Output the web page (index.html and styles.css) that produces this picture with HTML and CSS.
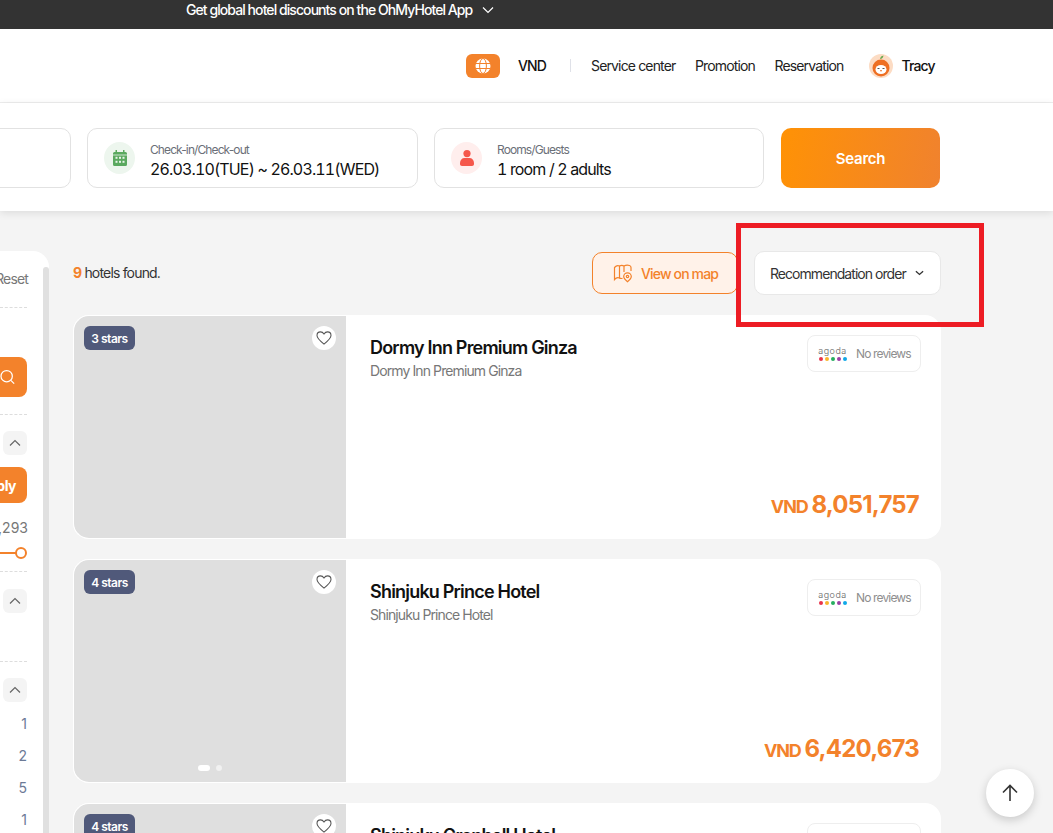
FILE: index.html
```html
<!DOCTYPE html>
<html lang="en">
<head>
<meta charset="utf-8">
<title>OhMyHotel</title>
<link rel="stylesheet" href="styles.css">
</head>
<body>
<div class="page">
  <div class="promo">
    <span>Get global hotel discounts on the OhMyHotel App</span>
    <svg class="promo-chevron" viewBox="0 0 12 8" width="12" height="8"><path d="M1 1.500l5 5 5-5" fill="none" stroke="#fff" stroke-width="1.200"/></svg>
  </div>

  <header class="header">
    <span class="globe">
      <svg viewBox="0 0 16 16" width="16" height="16"><circle cx="8" cy="8" r="7.500" fill="#fff"/><g fill="none" stroke="#f3822b" stroke-width="1"><ellipse cx="8" cy="8" rx="3.400" ry="7.500"/><path d="M1 5.500h14M1 10.500h14"/></g></svg>
    </span>
    <span class="currency">VND</span>
    <span class="divider"></span>
    <nav class="nav">
      <a>Service center</a>
      <a>Promotion</a>
      <a>Reservation</a>
    </nav>
    <span class="avatar">
      <svg viewBox="0 0 24 24" width="24" height="24">
        <circle cx="12" cy="12" r="12" fill="#fcdcc4"/>
        <path d="M11 5c.3-2 1.600-3.200 3.500-3.500-.1 2-1.400 3.300-3.500 3.500z" fill="#6aa84f"/>
        <circle cx="12" cy="14" r="8.500" fill="#ee6f22"/>
        <ellipse cx="12" cy="15.500" rx="5.500" ry="4.500" fill="#fff"/>
        <path d="M8.500 14.500h2M13.500 14.500h2" stroke="#555" stroke-width="1"/>
        <path d="M11 16.500q1 1 2 0" fill="none" stroke="#ee6f22" stroke-width="1"/>
      </svg>
    </span>
    <span class="user">Tracy</span>
  </header>

  <section class="search">
    <div class="field field-first"></div>
    <div class="field field-date">
      <span class="field-icon field-icon-green">
        <svg viewBox="0 0 16 16" width="16" height="16"><path d="M3.500 0h1.500v2h6V0h1.500v2h1A1.500 1.500 0 0 1 15 3.500V14.500a1.500 1.500 0 0 1-1.500 1.500h-11A1.500 1.500 0 0 1 1 14.500V3.500A1.500 1.500 0 0 1 2.500 2h1z" fill="#5aa95f"/><g fill="#e9f4ea"><rect x="1" y="4.600" width="14" height=".8"/><rect x="3.500" y="6.800" width="2" height="2"/><rect x="7" y="6.800" width="2" height="2"/><rect x="10.500" y="6.800" width="2" height="2"/><rect x="3.500" y="10.800" width="2" height="2"/><rect x="7" y="10.800" width="2" height="2"/><rect x="10.500" y="10.800" width="2" height="2"/></g></svg>
      </span>
      <div class="field-text">
        <span class="field-label">Check-in/Check-out</span>
        <span class="field-value">26.03.10(TUE) ~ 26.03.11(WED)</span>
      </div>
    </div>
    <div class="field field-guests">
      <span class="field-icon field-icon-red">
        <svg viewBox="0 0 14 16" width="14" height="16"><circle cx="7" cy="3.600" r="3.600" fill="#f5574b"/><path d="M0 13c0-3 2-5 4.500-5h5c2.500 0 4.500 2 4.500 5v1c0 1-.8 2-2 2H2c-1.200 0-2-1-2-2z" fill="#f5574b"/></svg>
      </span>
      <div class="field-text">
        <span class="field-label">Rooms/Guests</span>
        <span class="field-value">1 room / 2 adults</span>
      </div>
    </div>
    <button class="search-btn">Search</button>
  </section>

  <div class="content">
    <aside class="sidebar">
      <div class="side-inner">
        <div class="side-reset">Reset</div>
        <div class="dash dash-a"></div>
        <div class="side-search">
          <svg viewBox="0 0 18 18" width="20" height="20"><circle cx="8" cy="8" r="6.800" fill="none" stroke="#fff" stroke-width="1.500"/><path d="M13 13l4 4" stroke="#fff" stroke-width="1.500"/></svg>
        </div>
        <div class="dash dash-b"></div>
        <div class="side-toggle toggle-a"><svg viewBox="0 0 12 8" width="12" height="8"><path d="M1 6.500l5-5 5 5" fill="none" stroke="#666" stroke-width="1.200"/></svg></div>
        <div class="side-apply"><span>Apply</span></div>
        <div class="side-range">18,293</div>
        <div class="slider"><span class="slider-track"></span><span class="slider-knob"></span></div>
        <div class="dash dash-c"></div>
        <div class="side-toggle toggle-b"><svg viewBox="0 0 12 8" width="12" height="8"><path d="M1 6.500l5-5 5 5" fill="none" stroke="#666" stroke-width="1.200"/></svg></div>
        <div class="dash dash-d"></div>
        <div class="side-toggle toggle-c"><svg viewBox="0 0 12 8" width="12" height="8"><path d="M1 6.500l5-5 5 5" fill="none" stroke="#666" stroke-width="1.200"/></svg></div>
        <div class="side-counts">
          <span>1</span><span>2</span><span>5</span><span>1</span>
        </div>
      </div>
      <div class="side-scroll"></div>
    </aside>

    <main class="results">
      <div class="toolbar">
        <p class="found"><b>9</b> hotels found.</p>
        <div class="toolbar-actions">
          <button class="map-btn">
            <svg viewBox="0 0 20 20" width="20" height="20" fill="none" stroke="#f3822b" stroke-width="1.200"><path d="M1.500 4.500c1.500-1.800 3.500-2.200 5-1.500v12c-1.500-.7-3.500-.3-5 1.500z"/><path d="M6.500 3c1.500-.8 3-.8 4.500 0v6M6.500 15c1 .5 2 .6 3 .4"/><path d="M11 3c1.700-.9 3.500-1 5.500-.5 1 .3 1.500 1 1.500 2V8"/><path d="M14.500 18.800c-2.500-2-3.800-3.600-3.800-5.200a3.800 3.800 0 0 1 7.600 0c0 1.600-1.300 3.200-3.800 5.200z"/><circle cx="14.500" cy="13.500" r="1.200"/></svg>
            View on map
          </button>
          <button class="sort-btn">
            <span>Recommendation order</span>
            <svg viewBox="0 0 10 6" width="9" height="6"><path d="M1 1l4 3.600L9 1" fill="none" stroke="#333" stroke-width="1.500"/></svg>
          </button>
        </div>
      </div>

      <article class="card">
        <div class="photo">
          <span class="stars">3 stars</span>
          <span class="heart"><svg viewBox="0 0 18 16" width="16" height="14"><path d="M9 15C4 11 1 8.500 1 5.200 1 2.800 2.800 1 5 1c1.600 0 3 .9 4 2.400C10 1.900 11.400 1 13 1c2.200 0 4 1.800 4 4.200C17 8.500 14 11 9 15z" fill="none" stroke="#555" stroke-width="1.200"/></svg></span>
        </div>
        <div class="info">
          <div class="info-top">
            <div>
              <h2 class="name">Dormy Inn Premium Ginza</h2>
              <p class="sub">Dormy Inn Premium Ginza</p>
            </div>
            <div class="review">
              <span class="agoda"><span class="agoda-word">agoda</span><span class="agoda-dots"><i class="d1"></i><i class="d2"></i><i class="d3"></i><i class="d4"></i><i class="d5"></i></span></span>
              <span class="review-text">No reviews</span>
            </div>
          </div>
          <div class="price"><span class="price-cur">VND</span> <span class="price-num">8,051,757</span></div>
        </div>
      </article>

      <article class="card">
        <div class="photo">
          <span class="stars">4 stars</span>
          <span class="heart"><svg viewBox="0 0 18 16" width="16" height="14"><path d="M9 15C4 11 1 8.500 1 5.200 1 2.800 2.800 1 5 1c1.600 0 3 .9 4 2.400C10 1.900 11.400 1 13 1c2.200 0 4 1.800 4 4.200C17 8.500 14 11 9 15z" fill="none" stroke="#555" stroke-width="1.200"/></svg></span>
          <span class="pager"><i class="pager-on"></i><i></i></span>
        </div>
        <div class="info">
          <div class="info-top">
            <div>
              <h2 class="name">Shinjuku Prince Hotel</h2>
              <p class="sub">Shinjuku Prince Hotel</p>
            </div>
            <div class="review">
              <span class="agoda"><span class="agoda-word">agoda</span><span class="agoda-dots"><i class="d1"></i><i class="d2"></i><i class="d3"></i><i class="d4"></i><i class="d5"></i></span></span>
              <span class="review-text">No reviews</span>
            </div>
          </div>
          <div class="price"><span class="price-cur">VND</span> <span class="price-num">6,420,673</span></div>
        </div>
      </article>

      <article class="card">
        <div class="photo">
          <span class="stars">4 stars</span>
          <span class="heart"><svg viewBox="0 0 18 16" width="16" height="14"><path d="M9 15C4 11 1 8.500 1 5.200 1 2.800 2.800 1 5 1c1.600 0 3 .9 4 2.400C10 1.900 11.400 1 13 1c2.200 0 4 1.800 4 4.200C17 8.500 14 11 9 15z" fill="none" stroke="#555" stroke-width="1.200"/></svg></span>
        </div>
        <div class="info">
          <div class="info-top">
            <div>
              <h2 class="name">Shinjuku Granbell Hotel</h2>
              <p class="sub">Shinjuku Granbell Hotel</p>
            </div>
            <div class="review">
              <span class="agoda"><span class="agoda-word">agoda</span><span class="agoda-dots"><i class="d1"></i><i class="d2"></i><i class="d3"></i><i class="d4"></i><i class="d5"></i></span></span>
              <span class="review-text">No reviews</span>
            </div>
          </div>
        </div>
      </article>
    </main>
  </div>

  <div class="annotation"></div>
  <button class="to-top">
    <svg viewBox="0 0 18 18" width="18" height="18"><path d="M9 17V1.500M2 8.500l7-7 7 7" fill="none" stroke="#333" stroke-width="1.600"/></svg>
  </button>
</div>
</body>
</html>
```
FILE: styles.css
```css
* { box-sizing: border-box; }
html, body { margin: 0; padding: 0; }
body { font-family: Inter, "Liberation Sans", sans-serif; color: #111; background: #f4f4f4; }
.page { position: relative; width: 1053px; height: 833px; overflow: hidden; background: #f4f4f4; }

.promo { height: 29px; background: #333; color: #fff; font-size: 14px; letter-spacing: -0.93px; font-weight: 500; display: flex; align-items: flex-start; padding: 1px 0 0 186px; gap: 10px; line-height: 17px; }
.promo-chevron { margin-top: 5px; }

.header { height: 74px; background: #fff; border-bottom: 1px solid #eee; display: flex; align-items: center; padding: 0 0 0 466px; }
.globe { width: 34px; height: 24px; border-radius: 6px; background: #f3822b; display: flex; align-items: center; justify-content: center; }
.currency { margin-left: 18px; font-size: 14px; font-weight: 500; letter-spacing: -0.85px; width: 28px; }
.divider { width: 1px; height: 13px; background: #dfe1e8; margin-left: 24px; }
.nav { display: flex; gap: 19.500px; margin-left: 20px; font-size: 14px; letter-spacing: -0.85px; color: #222; }
.avatar { margin-left: 26px; width: 24px; height: 24px; }
.avatar svg { display: block; }
.user { margin-left: 8px; font-size: 14px; font-weight: 500; letter-spacing: -0.85px; }

.search { height: 108px; background: #fff; box-shadow: 0 2px 8px rgba(0,0,0,.1); display: flex; padding-top: 25px; position: relative; }
.field { height: 60px; background: #fff; border: 1px solid #e2e2e2; border-radius: 10px; display: flex; align-items: center; padding-left: 16px; gap: 15px; margin-right: 16px; }
.field-first { width: 331px; margin-left: -260px; }
.field-date { width: 331px; }
.field-guests { width: 330px; margin-right: 17px; }
.field-icon { width: 31px; height: 32px; border-radius: 50%; display: flex; align-items: center; justify-content: center; flex: none; }
.field-icon-green { background: #edf6ee; }
.field-icon-red { background: #ffeeed; }
.field-text { display: flex; flex-direction: column; margin-top: 6px; }
.field-label { font-size: 12px; line-height: 16px; color: #6b6f78; letter-spacing: -0.9px; }
.field-value { font-size: 16px; line-height: 22px; color: #111; letter-spacing: -0.86px; font-variant-numeric: tabular-nums; }
.search-btn { width: 159px; height: 60px; border: 0; border-radius: 10px; background: linear-gradient(100deg, #ff9205, #f0822e); color: #fff; font: 600 15px Inter, "Liberation Sans", sans-serif; letter-spacing: -0.2px; }

.content { display: flex; gap: 24px; margin-top: 40px; align-items: flex-start; }
.sidebar { width: 49px; height: 600px; background: #fff; border-top-right-radius: 16px; display: flex; overflow: hidden; flex: none; }
.side-inner { width: 43px; padding-right: 16px; flex: none; font-size: 14px; color: #777; }
.side-scroll { width: 6px; margin-top: 16px; background: #e0e0e0; border-radius: 3px 3px 0 0; }
.side-reset { height: 16px; margin: 20px -1px 0 0; line-height: 16px; display: flex; justify-content: flex-end; letter-spacing: -0.85px; }
.dash { border-top: 1px dashed #ddd; }
.dash-a { margin-top: 20px; }
.side-search { margin-top: 49px; height: 40px; background: #f3822b; border-radius: 0 8px 8px 0; display: flex; align-items: center; justify-content: flex-end; padding-right: 12px; }
.dash-b { margin-top: 17px; }
.side-toggle { width: 24px; height: 24px; background: #f4f4f4; border-radius: 6px; display: flex; align-items: center; justify-content: center; margin-left: 3px; }
.toggle-a { margin-top: 16px; }
.side-apply { margin-top: 12px; height: 36px; background: #f3822b; border-radius: 0 8px 8px 0; color: #fff; font-weight: 700; font-size: 14px; letter-spacing: -0.5px; display: flex; align-items: center; justify-content: flex-end; padding-right: 11px; white-space: nowrap; }
.side-range { margin: 16px -1px 0 0; height: 18px; line-height: 18px; display: flex; justify-content: flex-end; }
.slider { position: relative; height: 12px; margin-top: 10px; }
.slider-track { display: block; height: 2px; background: #f3822b; margin-top: 5px; position: absolute; left: 0; right: 4px; }
.slider-knob { position: absolute; right: 0; top: 0; width: 12px; height: 12px; border-radius: 50%; background: #fff; border: 2px solid #f3822b; }
.dash-c { margin-top: 12px; }
.toggle-b { margin-top: 17px; }
.dash-d { margin-top: 48px; }
.toggle-c { margin-top: 16px; }
.side-counts { display: flex; flex-direction: column; align-items: flex-end; margin-top: 6px; color: #6c7a96; line-height: 32px; }

.results { width: 868px; flex: none; }
.toolbar { height: 64px; display: flex; justify-content: space-between; align-items: flex-start; }
.found { margin: 14px 0 0; font-size: 14px; line-height: 16px; letter-spacing: -0.82px; color: #333; }
.found b { color: #f3822b; font-weight: 700; }
.toolbar-actions { display: flex; gap: 16px; align-items: flex-start; }
.map-btn { width: 146px; height: 42px; margin-top: 1px; border: 1px solid #f3822b; border-radius: 10px; background: #fff2e9; color: #f3822b; font: 500 14px Inter, "Liberation Sans", sans-serif; letter-spacing: -0.85px; display: flex; align-items: center; gap: 8px; padding: 0 0 0 20px; }
.sort-btn { width: 187px; height: 44px; border: 1px solid #e8e8e8; border-radius: 10px; background: #fff; color: #333; font: 400 14px Inter, "Liberation Sans", sans-serif; letter-spacing: -0.95px; display: flex; align-items: center; justify-content: space-between; padding: 0 16px 0 15px; white-space: nowrap; }

.card { height: 224px; background: #fff; border-radius: 16px; display: flex; margin-bottom: 20px; }
.photo { position: relative; width: 273px; background: #dfdfdf; border: 1px solid #fff; border-right: 0; border-radius: 16px 0 0 16px; flex: none; }
.stars { position: absolute; left: 10px; top: 10px; height: 24px; width: 51px; border-radius: 6px; background: #50597a; color: #fff; font-size: 12px; font-weight: 600; letter-spacing: -0.5px; display: flex; align-items: center; justify-content: center; }
.heart { position: absolute; right: 10px; top: 10px; width: 24px; height: 24px; border-radius: 50%; background: #fff; display: flex; align-items: center; justify-content: center; }
.pager { position: absolute; left: 124px; bottom: 11px; display: flex; gap: 6px; }
.pager i { display: block; width: 6px; height: 6px; border-radius: 3px; background: #fff; opacity: .55; }
.pager .pager-on { width: 12px; opacity: 1; }

.info { flex: 1; display: flex; flex-direction: column; justify-content: space-between; padding: 20px 20px 18px 24px; }
.info-top { display: flex; justify-content: space-between; align-items: flex-start; }
.name { margin: 2px 0 3px; font-size: 18px; line-height: 22px; font-weight: 600; letter-spacing: -0.8px; color: #111; }
.sub { margin: 0; font-size: 14px; line-height: 18px; color: #777; letter-spacing: -0.9px; }
.review { width: 114px; height: 37px; border: 1px solid #eee; border-radius: 8px; display: flex; align-items: center; gap: 9px; padding-left: 10px; }
.agoda { display: flex; flex-direction: column; align-items: center; width: 29px; }
.agoda-word { font-size: 9px; line-height: 9px; color: #666; letter-spacing: .5px; font-weight: 300; }
.agoda-dots { display: flex; gap: 2px; margin-top: 2px; }
.agoda-dots i { display: block; width: 4px; height: 4px; border-radius: 50%; }
.d1 { background: #e8344b; }
.d2 { background: #f9b52c; }
.d3 { background: #27ae60; }
.d4 { background: #9b3fa5; }
.d5 { background: #10a8e8; }
.review-text { font-size: 12px; color: #8e8e8e; letter-spacing: -0.85px; white-space: nowrap; }
.price { text-align: right; color: #f3822b; font-weight: 700; line-height: 28px; white-space: nowrap; margin-right: 2px; }
.price-cur { font-size: 18px; letter-spacing: -1.1px; }
.price-num { font-size: 24px; letter-spacing: -0.8px; }

.annotation { position: absolute; left: 736px; top: 223px; width: 248px; height: 104px; border: 5px solid #ed1c24; }
.to-top { position: absolute; left: 986px; top: 769px; width: 48px; height: 48px; border: 0; border-radius: 50%; background: #fff; box-shadow: 0 3px 10px rgba(0,0,0,.18); display: flex; align-items: center; justify-content: center; padding: 0; }
```
